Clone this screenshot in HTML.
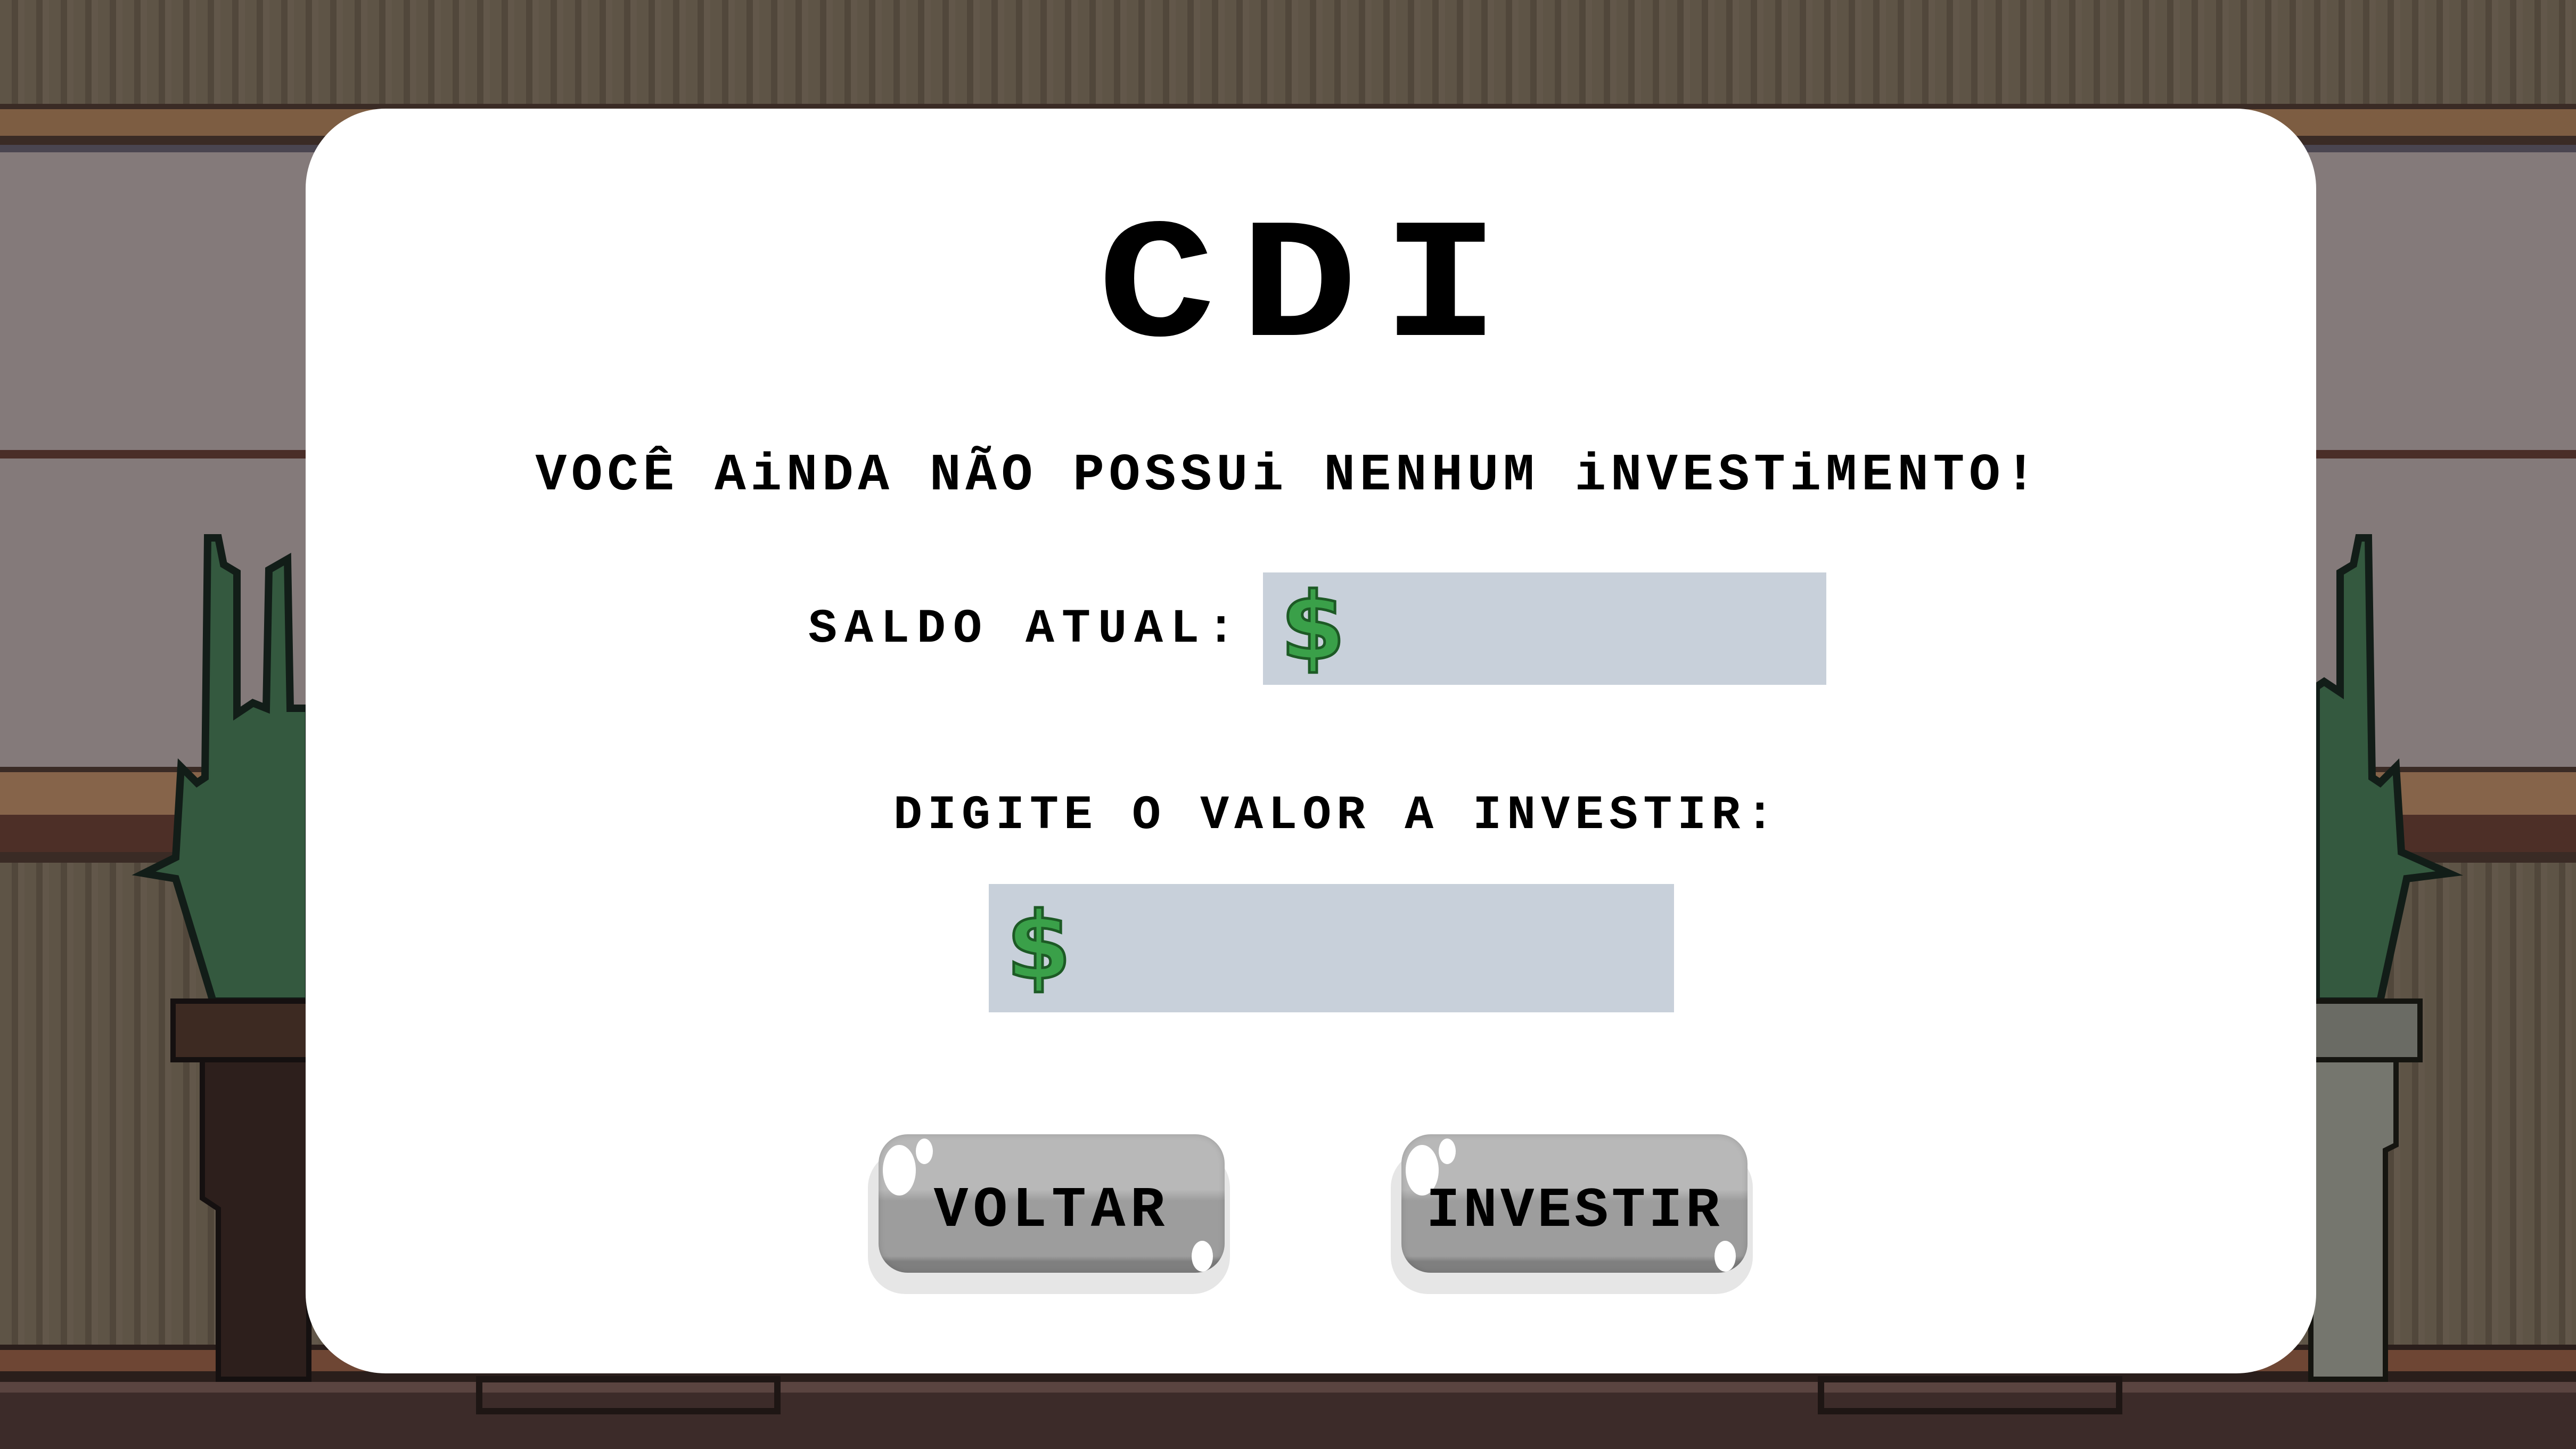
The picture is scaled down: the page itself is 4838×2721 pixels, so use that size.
<!DOCTYPE html>
<html><head><meta charset="utf-8"><style>
html,body{margin:0;padding:0}
body{width:4838px;height:2721px;position:relative;overflow:hidden;background:#594e41;font-family:"Liberation Mono","DejaVu Sans Mono",monospace}
.abs{position:absolute}
.stripes{background:repeating-linear-gradient(90deg,#5e5446 0 22px,#51473b 22px 34px,#62574a 34px 46px)}
.t{position:absolute;left:0;width:4838px;text-align:center;font-weight:bold;color:#000;white-space:nowrap}
.inp{position:absolute;background:#c8d0da}
.dol{position:absolute;font-family:"DejaVu Sans","Liberation Sans",sans-serif;font-weight:bold;color:#3aa049;-webkit-text-stroke:5px #1d5a25;line-height:1}
.btn{position:absolute;width:650px;height:260px;border-radius:60px}
.btn .sh{position:absolute;left:-20px;top:30px;width:680px;height:270px;border-radius:70px;background:#e6e6e6}
.btn .body{position:absolute;left:0;top:0;width:650px;height:260px;border-radius:55px;background:linear-gradient(#b8b8b8 0 40%,#9d9d9d 48% 88%,#7f7f7f 92%);box-shadow:inset 0 0 12px rgba(0,0,0,.15)}
.btn .c{position:absolute;background:#fff;border-radius:50%}
.btn span{position:absolute;left:0;right:0;top:90px;text-align:center;font-size:108px;font-weight:bold;line-height:1;letter-spacing:9px}
</style></head><body>
<div class="abs stripes" style="left:0;top:0;width:4838px;height:2721px"></div>
<div class="abs" style="left:0;top:195px;width:4838px;height:80px;background:#3a2b25"></div>
<div class="abs" style="left:0;top:205px;width:4838px;height:50px;background:#7d5d42"></div>
<div class="abs" style="left:0;top:272px;width:4838px;height:1170px;background:#847a7a"></div>
<div class="abs" style="left:0;top:272px;width:4838px;height:14px;background:#4a4550"></div>
<div class="abs" style="left:0;top:845px;width:4838px;height:16px;background:#4a2e28"></div>
<div class="abs" style="left:0;top:1440px;width:4838px;height:180px;background:#3a2b25"></div>
<div class="abs" style="left:0;top:1450px;width:4838px;height:80px;background:#86644a"></div>
<div class="abs" style="left:0;top:1530px;width:4838px;height:70px;background:#4d2f27"></div>
<div class="abs" style="left:0;top:2525px;width:4838px;height:70px;background:#2a1e1b"></div>
<div class="abs" style="left:0;top:2535px;width:4838px;height:40px;background:#6e4634"></div>
<div class="abs" style="left:0;top:2595px;width:4838px;height:126px;background:#3c2b29"></div>
<div class="abs" style="left:0;top:2595px;width:4838px;height:20px;background:#5a4440"></div>
<svg class="abs" style="left:0;top:0" width="4838" height="2721">
<g fill="#34593f" stroke="#121d18" stroke-width="14">
<polygon points="390,1010 410,1010 420,1060 445,1075 445,1340 475,1320 500,1330 505,1070 540,1050 545,1330 580,1330 580,1880 400,1880 330,1650 270,1640 330,1610 340,1440 370,1470 385,1460"/>
<polygon points="4448,1010 4430,1010 4420,1060 4395,1075 4395,1300 4365,1280 4350,1290 4350,1880 4470,1880 4520,1650 4600,1640 4510,1600 4500,1440 4470,1470 4455,1460"/>
</g>
<rect x="325" y="1880" width="260" height="110" fill="#3d2a22" stroke="#151010" stroke-width="10"/>
<polygon points="380,1990 580,1990 580,2590 410,2590 410,2270 380,2250" fill="#2d1f1c" stroke="#151010" stroke-width="10"/>
<rect x="4340" y="1880" width="205" height="110" fill="#6a6b64" stroke="#151510" stroke-width="10"/>
<polygon points="4340,1990 4500,1990 4500,2150 4480,2160 4480,2590 4340,2590" fill="#75766e" stroke="#151510" stroke-width="10"/>
<rect x="900" y="2590" width="560" height="60" fill="none" stroke="#1e1614" stroke-width="12"/>
<rect x="3420" y="2590" width="560" height="60" fill="none" stroke="#1e1614" stroke-width="12"/>
</svg>
<div class="abs" style="left:574px;top:204px;width:3776px;height:2375px;background:#fff;border-radius:150px"></div>
<div class="t" style="top:385px;font-size:320px;line-height:1;letter-spacing:40px;padding-left:40px;transform:scaleX(1.15)">CDI</div>
<div class="t" style="top:845px;font-size:98px;line-height:1;letter-spacing:8.5px">VOCÊ AiNDA NÃO POSSUi NENHUM iNVESTiMENTO!</div>
<div class="t" style="top:1137px;left:1518px;width:860px;text-align:left;font-size:90px;line-height:1;letter-spacing:14px">SALDO ATUAL:</div>
<div class="inp" style="left:2372px;top:1075px;width:1058px;height:211px"></div>
<div class="dol" style="left:2405px;top:1090px;font-size:175px">$</div>
<div class="t" style="top:1487px;left:1678px;width:1760px;text-align:left;font-size:90px;line-height:1;letter-spacing:10px">DIGITE O VALOR A INVESTIR:</div>
<div class="inp" style="left:1857px;top:1660px;width:1287px;height:241px"></div>
<div class="dol" style="left:1890px;top:1690px;font-size:175px">$</div>
<div class="btn" style="left:1650px;top:2130px"><div class="sh"></div><div class="body"></div>
<div class="c" style="left:8px;top:20px;width:62px;height:95px"></div><div class="c" style="left:70px;top:8px;width:32px;height:48px"></div><div class="c" style="left:588px;top:200px;width:40px;height:58px"></div><span>VOLTAR</span></div>
<div class="btn" style="left:2632px;top:2130px"><div class="sh"></div><div class="body"></div>
<div class="c" style="left:8px;top:20px;width:62px;height:95px"></div><div class="c" style="left:70px;top:8px;width:32px;height:48px"></div><div class="c" style="left:588px;top:200px;width:40px;height:58px"></div><span style="letter-spacing:6px;font-size:106px;top:91px">INVESTIR</span></div>
</body></html>
